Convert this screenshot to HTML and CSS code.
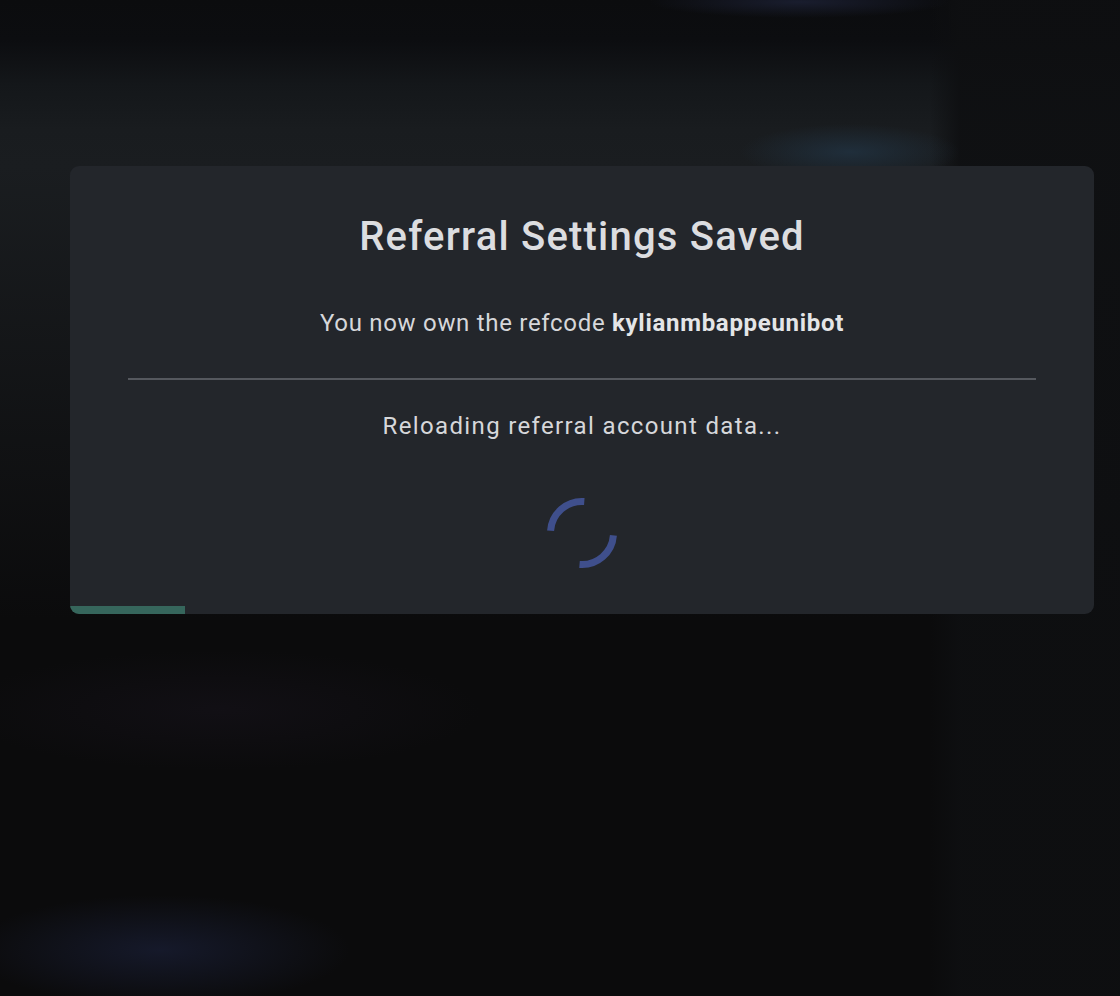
FILE: index.html
```html
<!DOCTYPE html>
<html lang="en">
<head>
<meta charset="utf-8">
<title>Referral Settings Saved</title>
<link rel="stylesheet" href="styles.css">
</head>
<body>
<div class="backdrop">
  <section class="modal">
    <h1 class="modal-title">Referral Settings Saved</h1>
    <p class="modal-text">You now own the refcode <strong>kylianmbappeunibot</strong></p>
    <hr class="modal-divider">
    <p class="modal-status">Reloading referral account data...</p>
    <div class="spinner-wrap">
      <svg class="spinner" width="72" height="72" viewBox="0 0 72 72">
        <circle cx="36" cy="36" r="31.5" fill="none" stroke="#3f4f8c" stroke-width="7" stroke-dasharray="49.5 49.5" transform="rotate(184 36 36)"/>
      </svg>
    </div>
    <div class="progress"><div class="progress-fill" style="width: 115px"></div></div>
  </section>
</div>
</body>
</html>
```

FILE: styles.css
```css
* { box-sizing: border-box; }
html, body { margin: 0; padding: 0; }
body {
  width: 1120px;
  height: 996px;
  overflow: hidden;
  font-family: Roboto, "Liberation Sans", sans-serif;
  background-color: #0b0c0d;
  background-image:
    radial-gradient(ellipse 110px 28px at 850px 152px, rgba(32, 48, 62, 0.9), rgba(32, 48, 62, 0) 100%),
    radial-gradient(ellipse 150px 16px at 800px 2px, rgba(26, 30, 48, 0.95), rgba(26, 30, 48, 0) 100%),
    radial-gradient(ellipse 190px 55px at 160px 950px, rgba(22, 26, 44, 0.95), rgba(22, 26, 44, 0) 100%),
    radial-gradient(ellipse 260px 60px at 220px 710px, rgba(20, 17, 24, 0.7), rgba(20, 17, 24, 0) 100%),
    linear-gradient(to right, rgba(13, 14, 16, 0) 930px, rgba(14, 15, 17, 0.9) 960px, rgba(14, 15, 17, 0.9) 1120px),
    linear-gradient(to bottom, #0b0c0e 0px, #0c0d10 40px, #14171a 85px, #191c1f 130px, #1a1d20 166px, #0b0b0c 620px, #0b0b0c 996px);
}
.backdrop {
  padding: 166px 26px 0 70px;
}
.modal {
  position: relative;
  width: 1024px;
  height: 448px;
  background: #23262b;
  border-radius: 9px;
  overflow: hidden;
  padding: 0 58px;
  display: flex;
  flex-direction: column;
  align-items: stretch;
  text-align: center;
  color: #d9dadd;
}
.modal-title {
  margin: 46px 0 0;
  font-size: 40px;
  font-weight: 500;
  line-height: 50px;
  letter-spacing: 1.2px;
  color: #dcdde0;
}
.modal-text {
  margin: 46px 0 0;
  font-size: 24px;
  line-height: 30px;
  font-weight: 400;
  letter-spacing: 0.7px;
  color: #d6d7da;
}
.modal-text strong {
  font-weight: 700;
  color: #e4e5e7;
}
.modal-divider {
  margin: 40px 0 0;
  border: 0;
  height: 2px;
  background: #55585e;
}
.modal-status {
  margin: 30px 0 0;
  font-size: 24px;
  line-height: 32px;
  letter-spacing: 1.35px;
  color: #d6d7da;
}
.spinner-wrap {
  margin-top: 55px;
  display: flex;
  justify-content: center;
}
.spinner { display: block; }
.progress {
  position: absolute;
  left: 0;
  bottom: 0;
  width: 100%;
  height: 8px;
}
.progress-fill {
  height: 100%;
  background: #36665c;
}
```
